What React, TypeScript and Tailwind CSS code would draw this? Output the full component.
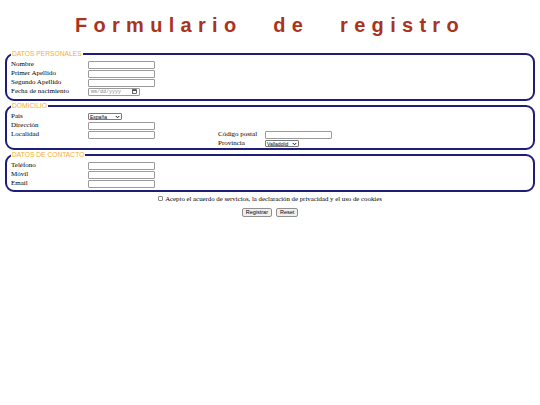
import React from 'react';

const TextBox: React.FC<{ w?: string }> = ({ w = 'w-[67px]' }) => (
  <input
    type="text"
    className={`${w} h-[8px] border border-[#9a9a9a] rounded-[1px] bg-white block`}
  />
);

const Chevron: React.FC = () => (
  <svg width="5" height="4" viewBox="0 0 10 8" className="shrink-0">
    <path d="M1.5 2 L5 5.5 L8.5 2" fill="none" stroke="#111" strokeWidth="2" />
  </svg>
);

const FakeSelect: React.FC<{ value: string; w: string }> = ({ value, w }) => (
  <div
    className={`${w} h-[7px] border border-[#7a7a7a] rounded-[1px] bg-white flex items-center justify-between pl-[1px] pr-[1px] font-['Liberation_Sans'] text-[5px] leading-[6px] text-black`}
  >
    <span>{value}</span>
    <Chevron />
  </div>
);

const DateBox: React.FC = () => (
  <div className="w-[52px] h-[8px] border border-[#9a9a9a] rounded-[1px] bg-white flex items-center justify-between pl-[2px] pr-[2px] font-['Liberation_Mono'] text-[5px] leading-[6px] text-[#8a8a8a]">
    <span>mm/dd/yyyy</span>
    <svg width="5" height="5" viewBox="0 0 10 10">
      <rect x="1" y="1.5" width="8" height="7.5" fill="none" stroke="#222" strokeWidth="1.3" />
      <rect x="1" y="1.5" width="8" height="2" fill="#222" />
    </svg>
  </div>
);

const Label: React.FC<{ children: React.ReactNode }> = ({ children }) => (
  <span className="text-[7px] leading-[9px] text-black whitespace-nowrap">{children}</span>
);

const Row: React.FC<{ label: string; children: React.ReactNode }> = ({ label, children }) => (
  <>
    <div className="h-[9px] flex items-center"><Label>{label}</Label></div>
    <div className="h-[9px] flex items-center">{children}</div>
    <div />
    <div />
  </>
);

const Legend: React.FC<{ children: React.ReactNode }> = ({ children }) => (
  <legend className="px-[1px] font-['Liberation_Sans'] text-[6.7px] leading-[8px] text-[#fbac2c]">
    {children}
  </legend>
);

export default function App() {
  return (
    <div className="w-[540px] h-[405px] bg-white font-['Liberation_Serif',serif] overflow-hidden">
      <h1 className="mt-[14px] text-center font-['Liberation_Sans',sans-serif] font-bold text-[20px] leading-[23px] tracking-[6.3px] [word-spacing:19px] text-[#a8341f]">
        Formulario de registro
      </h1>

      <form className="mt-[13px]">
        {/* Datos personales */}
        <fieldset className="mx-[5px] border-2 border-[#1e1e78] rounded-[9px] px-[4px] pt-[2px] pb-[3px]">
          <Legend>DATOS PERSONALES</Legend>
          <div className="grid grid-cols-[77px_130px_47px_1fr]">
            <Row label="Nombre"><TextBox /></Row>
            <Row label="Primer Apellido"><TextBox /></Row>
            <Row label="Segundo Apellido"><TextBox /></Row>
            <Row label="Fecha de nacimiento"><DateBox /></Row>
          </div>
        </fieldset>

        {/* Domicilio */}
        <fieldset className="mt-[1px] mx-[5px] border-2 border-[#1e1e78] rounded-[9px] px-[4px] pt-[2px] pb-0">
          <Legend>DOMICILIO</Legend>
          <div className="grid grid-cols-[77px_130px_47px_1fr]">
            <Row label="País"><FakeSelect value="España" w="w-[34px]" /></Row>
            <Row label="Dirección"><TextBox /></Row>
            <div className="h-[9px] flex items-center"><Label>Localidad</Label></div>
            <div className="h-[9px] flex items-center"><TextBox /></div>
            <div className="h-[9px] flex items-center"><Label>Código postal</Label></div>
            <div className="h-[9px] flex items-center"><TextBox /></div>
            <div />
            <div />
            <div className="h-[9px] flex items-center"><Label>Provincia</Label></div>
            <div className="h-[9px] flex items-center"><FakeSelect value="Valladolid" w="w-[34px]" /></div>
          </div>
        </fieldset>

        {/* Datos de contacto */}
        <fieldset className="mt-[1px] mx-[5px] border-2 border-[#1e1e78] rounded-[9px] px-[4px] pt-[2px] pb-[2px]">
          <Legend>DATOS DE CONTACTO</Legend>
          <div className="grid grid-cols-[77px_130px_47px_1fr]">
            <Row label="Teléfono"><TextBox /></Row>
            <Row label="Móvil"><TextBox /></Row>
            <Row label="Email"><TextBox /></Row>
          </div>
        </fieldset>

        <div className="mt-[2px] h-[9px] flex items-center justify-center gap-[2px]">
          <span className="w-[5px] h-[5px] border border-[#8a8a8a] rounded-[1px] bg-white" />
          <span className="text-[6.8px] leading-[9px] text-black whitespace-nowrap">
            Acepto el acuerdo de servicios, la declaración de privacidad y el uso de cookies
          </span>
        </div>

        <div className="mt-[5px] flex justify-center gap-[4px]">
          <button
            type="button"
            className="h-[9px] px-[3px] border border-[#8f8f8f] rounded-[2px] bg-[#efefef] font-['Liberation_Sans'] text-[5.5px] leading-[7px] text-black"
          >
            Registrar
          </button>
          <button
            type="button"
            className="h-[9px] px-[3px] border border-[#8f8f8f] rounded-[2px] bg-[#efefef] font-['Liberation_Sans'] text-[5.5px] leading-[7px] text-black"
          >
            Reset
          </button>
        </div>
      </form>
    </div>
  );
}
